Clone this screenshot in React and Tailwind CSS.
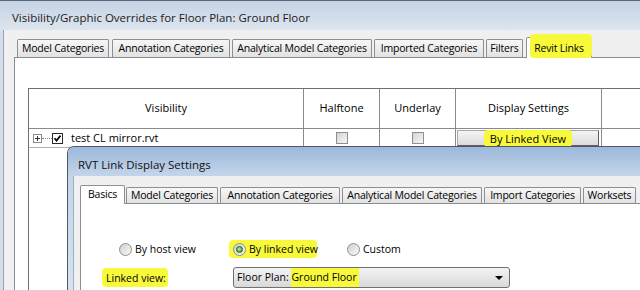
import React from "react";

const outerTabs = [
  { label: "Model Categories", cls: "ml-[3px] w-[92px]" },
  { label: "Annotation Categories", cls: "ml-[3px] w-[118px]" },
  { label: "Analytical Model Categories", cls: "ml-[2px] w-[140px]" },
  { label: "Imported Categories", cls: "ml-[2px] w-[110px]" },
  { label: "Filters", cls: "ml-[2px] w-[37px]" },
];

const innerTabs = [
  { label: "Model Categories", cls: "ml-[1px] w-[92px]" },
  { label: "Annotation Categories", cls: "ml-[2px] w-[120px]" },
  { label: "Analytical Model Categories", cls: "ml-[2px] w-[140px]" },
  { label: "Import Categories", cls: "ml-[2px] w-[97px]" },
  { label: "Worksets", cls: "ml-[2px] w-[53px]" },
];

function Tab({ label, cls, h }) {
  return (
    <div
      className={`${cls} ${h} shrink-0 flex items-center justify-center border border-b-0 border-[#8c8e94] rounded-t-[2px] bg-linear-to-b from-[#f7f7f7] to-[#e2e2e2] text-[10.5px] tracking-[-0.2px] leading-none whitespace-nowrap`}
    >
      {label}
    </div>
  );
}

function GrayCheck() {
  return (
    <div className="w-[12px] h-[12px] border border-[#8f8f8f] bg-linear-to-br from-[#d4d4d4] to-[#f6f6f6]" />
  );
}

function Radio({ checked }) {
  return (
    <div className="w-[13px] h-[13px] shrink-0 rounded-full border border-[#8e8f8f] bg-linear-to-br from-[#cfcfcf] to-[#fafafa] flex items-center justify-center">
      {checked && (
        <div className="w-[7px] h-[7px] rounded-full border border-[#1d5e17] bg-[radial-gradient(circle_at_40%_40%,#b4ec9b,#2f8f25)]" />
      )}
    </div>
  );
}

export default function App() {
  return (
    <div className="relative w-[640px] h-[290px] overflow-hidden bg-[#f0f0f0] font-['Open_Sans',sans-serif] text-[11px] text-black">
      {/* outer window title */}
      <div className="h-[30px] border-t border-[#5c6773] bg-linear-to-b from-[#c6d3e3] to-[#dce5ef] pl-[12px] pt-[10px] text-[11.5px] leading-[14px] text-[#1b1b1b] whitespace-nowrap">
        Visibility/Graphic Overrides for Floor Plan: Ground Floor
      </div>

      <div className="flex h-[260px]">
        <div className="w-[3px] shrink-0 bg-[#d3deea]" />
        <div className="w-px shrink-0 bg-[#97a5b5]" />
        <div className="flex-1 min-w-0 flex flex-col pl-[10px] pt-[7px]">
          <div className="flex items-end h-[20px]">
            {outerTabs.map((t) => (
              <Tab key={t.label} label={t.label} cls={t.cls} h="h-[18px]" />
            ))}
            <div className="relative z-10 ml-[3px] w-[66px] h-[21px] -mb-px shrink-0 flex items-center justify-center border border-b-0 border-[#8c8e94] rounded-t-[2px] bg-white">
              <div className="absolute left-[3px] -right-px -top-[4px] bottom-0 rounded-[4px] bg-[#f9f93c]" />
              <span className="relative text-[10.5px] tracking-[-0.2px] leading-none whitespace-nowrap">Revit Links</span>
            </div>
          </div>

          <div className="flex-1 border-l border-t border-[#898c95] bg-white pl-[13px] pt-[30px]">
            <div className="w-[700px] h-[220px] border-l border-t border-[#717171] bg-white">
              <div className="flex h-[40px] border-b border-[#8a8a8a]">
                <div className="w-[275px] shrink-0 border-r border-[#8a8a8a] flex items-center justify-center">Visibility</div>
                <div className="w-[76px] shrink-0 border-r border-[#8a8a8a] flex items-center justify-center">Halftone</div>
                <div className="w-[76px] shrink-0 border-r border-[#8a8a8a] flex items-center justify-center">Underlay</div>
                <div className="w-[146px] shrink-0 border-r border-[#8a8a8a] flex items-center justify-center">Display Settings</div>
                <div className="flex-1" />
              </div>
              <div className="flex h-[19px] border-b border-[#b0b0b0]">
                <div className="w-[275px] shrink-0 border-r border-[#8a8a8a] flex items-center pl-[4px]">
                  <svg width="9" height="9" viewBox="0 0 9 9">
                    <rect x="0.5" y="0.5" width="8" height="8" fill="#fff" stroke="#8a8a8a" />
                    <path d="M2 4.5h5M4.5 2v5" stroke="#333" strokeWidth="1" />
                  </svg>
                  <div className="w-[10px] border-t border-dotted border-[#8a8a8a]" />
                  <svg width="11" height="11" viewBox="0 0 11 11">
                    <rect x="0.5" y="0.5" width="10" height="10" fill="#fff" stroke="#2a2a2a" />
                    <path d="M2.5 5.3 L4.5 7.6 L8.5 2.6" stroke="#000" strokeWidth="1.7" fill="none" />
                  </svg>
                  <span className="ml-[8px] whitespace-nowrap">test CL mirror.rvt</span>
                </div>
                <div className="w-[76px] shrink-0 border-r border-[#8a8a8a] flex items-center justify-center">
                  <GrayCheck />
                </div>
                <div className="w-[76px] shrink-0 border-r border-[#8a8a8a] flex items-center justify-center">
                  <GrayCheck />
                </div>
                <div className="w-[146px] shrink-0 border-r border-[#8a8a8a] flex items-center pl-px">
                  <div className="w-[142px] h-[16px] border border-[#a8a8a8] border-r-[#5e5e5e] border-b-[#5e5e5e] rounded-[1px] bg-linear-to-b from-[#f4f4f4] to-[#dcdcdc] flex items-center justify-center">
                    <span className="bg-[#f9f93c] rounded-[4px] px-[6px] -my-px leading-[17px] whitespace-nowrap">By Linked View</span>
                  </div>
                </div>
                <div className="flex-1" />
              </div>
            </div>
          </div>
        </div>
      </div>

      {/* RVT Link Display Settings dialog, lying over the table */}
      <div className="absolute left-[67px] top-[146px] w-[600px] h-[160px] rounded-tl-[7px] border-l border-t border-[#4f5966] overflow-hidden flex flex-col">
        <div className="h-[29px] shrink-0 bg-linear-to-b from-[#9cb8da] to-[#c4d5ea] pl-[10px] pt-[11px] text-[11.5px] leading-[14px] text-[#111] whitespace-nowrap">
          RVT Link Display Settings
        </div>
        <div className="flex flex-1">
          <div className="w-[5px] shrink-0 bg-linear-to-b from-[#c4d5ea] to-[#d9e4f0]" />
          <div className="flex-1 min-w-0 flex flex-col bg-[#f0f0f0] border-l border-[#9eadbf] pl-[6px] pt-[9px]">
            <div className="flex items-end h-[18px]">
              <div className="relative z-10 w-[45px] h-[19px] -mb-px shrink-0 flex items-center justify-center pb-[2px] border border-b-0 border-[#8c8e94] rounded-t-[2px] bg-white text-[10.5px] tracking-[-0.2px] leading-none">
                Basics
              </div>
              {innerTabs.map((t) => (
                <Tab key={t.label} label={t.label} cls={t.cls} h="h-[16px]" />
              ))}
            </div>
            <div className="flex-1 border-l border-t border-[#898c95] bg-white pt-[36px] text-[10.5px]">
              <div className="flex items-center h-[18px]">
                <div className="ml-[38px] w-[110px] shrink-0 flex items-center gap-[3px]">
                  <Radio />
                  <span className="pt-[2px] whitespace-nowrap">By host view</span>
                </div>
                <div className="w-[88px] h-[18px] shrink-0 rounded-[4px] bg-[#f9f93c] flex items-center gap-[3px] pl-[4px]">
                  <Radio checked />
                  <span className="pt-[2px] whitespace-nowrap">By linked view</span>
                </div>
                <div className="ml-[30px] flex items-center gap-[3px]">
                  <Radio />
                  <span className="pt-[2px] whitespace-nowrap">Custom</span>
                </div>
              </div>
              <div className="flex items-center h-[21px] mt-[9px]">
                <div className="ml-[21px] w-[66px] h-[19px] shrink-0 rounded-[4px] bg-[#f9f93c] flex items-center pl-[4px] pt-[2px] whitespace-nowrap">
                  Linked view:
                </div>
                <div className="ml-[65px] w-[277px] h-[21px] shrink-0 rounded-[3px] border border-[#707070] bg-linear-to-b from-[#f3f3f3] to-[#d9d9d9] flex items-center pl-[3px] pr-[6px]">
                  <span className="pt-px whitespace-nowrap">Floor Plan:&nbsp;</span>
                  <span className="bg-[#f9f93c] h-[19px] flex items-center pt-px pr-[2px] whitespace-nowrap">Ground Floor</span>
                  <div className="flex-1" />
                  <svg width="8" height="4" viewBox="0 0 8 4">
                    <polygon points="0,0 8,0 4,4" fill="#000" />
                  </svg>
                </div>
              </div>
            </div>
          </div>
        </div>
      </div>
    </div>
  );
}
